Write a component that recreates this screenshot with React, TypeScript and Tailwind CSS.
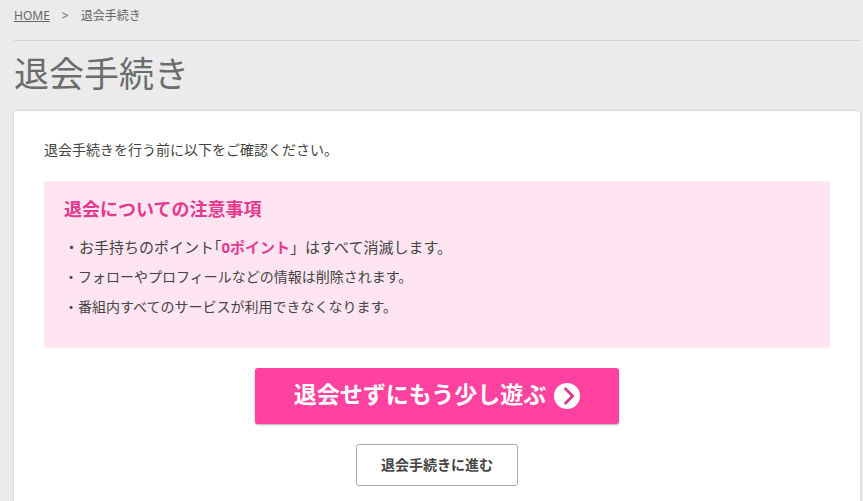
/**
 * WithdrawalPage — 退会手続きの確認画面
 */

const NOTICE_ITEMS = [
  'フォローやプロフィールなどの情報は削除されます。',
  '番組内すべてのサービスが利用できなくなります。',
]

function Breadcrumb() {
  return (
    <nav className="flex gap-3 border-b border-[#d2d2d2] pt-1.5 pb-3.5 text-xs leading-5 text-[#666]">
      <a href="#" className="underline">HOME</a>
      <span>&gt;</span>
      <span>退会手続き</span>
    </nav>
  )
}

function ArrowCircle() {
  return (
    <svg className="h-[26px] w-[26px]" viewBox="0 0 26 26" aria-hidden="true">
      <circle cx="13" cy="13" r="13" fill="#fff" />
      <path d="M10.8 5 18.6 13l-7.8 8" fill="none" stroke="#d93a8c" strokeWidth="2.8" />
    </svg>
  )
}

function Notice() {
  return (
    <section className="mt-5 rounded-[3px] bg-[#fee5f1] px-5 pt-3 pb-[26px]">
      <h2 className="text-lg leading-8 font-bold text-[#e5398f]">退会についての注意事項</h2>
      <ul className="mt-[7px] text-sm leading-[30px] text-[#444]">
        <li className="text-[15px]">
          ・お手持ちのポイント｢<strong className="font-bold text-[#e5398f]">0ポイント</strong>」はすべて消滅します。
        </li>
        {NOTICE_ITEMS.map(item => <li key={item}>・{item}</li>)}
      </ul>
    </section>
  )
}

export default function App() {
  return (
    <div className="flex min-h-screen flex-col bg-[#ebebeb] pr-[3px] pl-3.5 font-['Noto_Sans','Noto_Sans_CJK_JP',sans-serif]">
      <Breadcrumb />
      <h1 className="pt-1.5 pb-2.5 text-[35px] leading-[54px] text-[#6c6c6c]">退会手続き</h1>

      <main className="flex-1 rounded-t-[3px] bg-white px-[30px] pt-7 pb-3.5 shadow-[0_0_2px_rgba(0,0,0,0.25)]">
        <p className="text-sm leading-[22px] text-[#444]">退会手続きを行う前に以下をご確認ください。</p>

        <Notice />

        <div className="mt-5 flex flex-col items-center gap-5">
          <button className="flex h-14 w-[364px] items-center justify-center gap-2 rounded-[3px] bg-[#ff419f] text-[23px] font-bold text-white shadow-[0_1px_2px_rgba(0,0,0,0.3)]">
            <span className="pb-1">退会せずにもう少し遊ぶ</span>
            <ArrowCircle />
          </button>
          <button className="h-[42px] w-[162px] rounded-[3px] border border-[#aaa] bg-white text-sm font-bold text-[#444]">
            退会手続きに進む
          </button>
        </div>
      </main>
    </div>
  )
}
